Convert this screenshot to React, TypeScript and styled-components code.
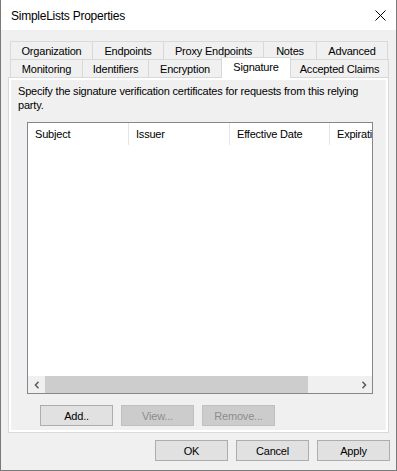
import styled, { createGlobalStyle } from "styled-components";

const GlobalStyle = createGlobalStyle`
  html, body {
    margin: 0;
    padding: 0;
    background: #f0f0f0;
  }
  * {
    box-sizing: border-box;
  }
`;

const Window = styled.div`
  width: 397px;
  height: 471px;
  display: flex;
  flex-direction: column;
  background: #f0f0f0;
  border: 1px solid #7a7a7a;
  border-top: none;
  font-family: "Liberation Sans", Arial, sans-serif;
  font-size: 11px;
  letter-spacing: -0.2px;
  color: #000;
`;

const TitleBar = styled.div`
  height: 30px;
  flex-shrink: 0;
  display: flex;
  align-items: center;
  justify-content: space-between;
  padding: 0 10px 0 10px;
  background: #fff;
`;

const Title = styled.span`
  font-size: 12px;
  letter-spacing: -0.25px;
  margin-top: 1px;
`;

const Close = styled.button`
  width: 12px;
  height: 12px;
  padding: 0;
  border: none;
  background: none;
  display: flex;
  align-items: center;
  justify-content: center;
`;

const Content = styled.div`
  flex: 1;
  display: flex;
  flex-direction: column;
  padding: 11px 7px 0 7px;
`;

const TabStrip = styled.div`
  display: flex;
  flex-direction: column;
  padding-left: 2px;
`;

const TabRow = styled.div`
  display: flex;
  align-items: flex-end;
  height: 18px;
`;

const Tab = styled.div<{ $w: number; $active?: boolean }>`
  position: relative;
  width: ${(p) => p.$w}px;
  height: ${(p) => (p.$active ? 21 : 18)}px;
  margin-left: -1px;
  margin-bottom: ${(p) => (p.$active ? -1 : 0)}px;
  z-index: ${(p) => (p.$active ? 1 : 0)};
  display: flex;
  align-items: center;
  justify-content: center;
  padding-bottom: ${(p) => (p.$active ? 3 : 0)}px;
  background: ${(p) => (p.$active ? "#fff" : "#f0f0f0")};
  border: 1px solid #d9d9d9;
  border-bottom: none;
  white-space: nowrap;

  &:first-child {
    margin-left: 0;
  }
`;

const Panel = styled.div`
  height: 356px;
  flex-shrink: 0;
  background: #fff;
  border: 1px solid #d9d9d9;
  padding: 2px;
  display: flex;
`;

const Page = styled.div`
  flex: 1;
  background: #f0f0f0;
  display: flex;
  flex-direction: column;
  padding: 4px 0 0 0;
`;

const Description = styled.p`
  margin: 0 0 0 7px;
  width: 350px;
  line-height: 14px;
`;

const ListView = styled.div`
  margin: 10px 0 0 16px;
  width: 346px;
  height: 272px;
  flex-shrink: 0;
  border: 1px solid #828790;
  background: #fff;
  display: flex;
  flex-direction: column;
  overflow: hidden;
`;

const HeaderRow = styled.div`
  height: 22px;
  display: flex;
  flex-shrink: 0;
`;

const HeaderCell = styled.div<{ $w: number }>`
  flex: 0 0 ${(p) => p.$w}px;
  display: flex;
  align-items: center;
  padding-left: 7px;
  border-right: 1px solid #e5e5e5;
  white-space: nowrap;
  overflow: hidden;
`;

const ListBody = styled.div`
  flex: 1;
`;

const HScroll = styled.div`
  height: 17px;
  display: flex;
  background: #f0f0f0;
`;

const ScrollArrow = styled.div`
  width: 17px;
  display: flex;
  align-items: center;
  justify-content: center;
`;

const ScrollTrack = styled.div`
  flex: 1;
  display: flex;
  align-items: stretch;
`;

const ScrollThumb = styled.div<{ $w: number }>`
  width: ${(p) => p.$w}px;
  background: #cdcdcd;
`;

const ButtonRow = styled.div<{ $inset: number; $end?: boolean }>`
  display: flex;
  gap: 8px;
  justify-content: ${(p) => (p.$end ? "flex-end" : "flex-start")};
  padding: 0 ${(p) => (p.$end ? p.$inset : 0)}px 0 ${(p) => (p.$end ? 0 : p.$inset)}px;
`;

const PanelButtons = styled(ButtonRow)`
  margin-top: 11px;
`;

const DialogButtons = styled(ButtonRow)`
  margin-top: 7px;
  margin-right: -7px;
`;

const Button = styled.button`
  width: 73px;
  height: 21px;
  padding: 0;
  background: #e1e1e1;
  border: 1px solid #adadad;
  font-family: "Liberation Sans", Arial, sans-serif;
  font-size: 11px;
  letter-spacing: -0.2px;
  color: #000;

  &:disabled {
    background: #cccccc;
    border-color: #bfbfbf;
    color: #8d8d8d;
  }
`;

const rowOne = [
  { label: "Organization", w: 83 },
  { label: "Endpoints", w: 72 },
  { label: "Proxy Endpoints", w: 101 },
  { label: "Notes", w: 54 },
  { label: "Advanced", w: 72 },
];

const rowTwo = [
  { label: "Monitoring", w: 73 },
  { label: "Identifiers", w: 67 },
  { label: "Encryption", w: 74 },
  { label: "Signature", w: 70, active: true },
  { label: "Accepted Claims", w: 99 },
];

const columns = [
  { label: "Subject", w: 101 },
  { label: "Issuer", w: 101 },
  { label: "Effective Date", w: 100 },
  { label: "Expiration Date", w: 100 },
];

function Chevron({ dir }: { dir: "left" | "right" }) {
  return (
    <svg width="6" height="8" viewBox="0 0 6 8">
      <path
        d={dir === "left" ? "M4.5 0.8 L1.5 4 L4.5 7.2" : "M1.5 0.8 L4.5 4 L1.5 7.2"}
        fill="none"
        stroke="#606060"
        strokeWidth="1.6"
      />
    </svg>
  );
}

export default function App() {
  return (
    <>
      <GlobalStyle />
      <Window>
        <TitleBar>
          <Title>SimpleLists Properties</Title>
          <Close aria-label="Close">
            <svg width="11" height="11" viewBox="0 0 11 11">
              <path d="M0.5 0.5 L10.5 10.5 M10.5 0.5 L0.5 10.5" stroke="#000" strokeWidth="1" />
            </svg>
          </Close>
        </TitleBar>
        <Content>
          <TabStrip>
            <TabRow>
              {rowOne.map((t) => (
                <Tab key={t.label} $w={t.w}>
                  {t.label}
                </Tab>
              ))}
            </TabRow>
            <TabRow>
              {rowTwo.map((t) => (
                <Tab key={t.label} $w={t.w} $active={t.active}>
                  {t.label}
                </Tab>
              ))}
            </TabRow>
          </TabStrip>
          <Panel>
            <Page>
              <Description>
                Specify the signature verification certificates for requests from this relying party.
              </Description>
              <ListView>
                <HeaderRow>
                  {columns.map((c) => (
                    <HeaderCell key={c.label} $w={c.w}>
                      {c.label}
                    </HeaderCell>
                  ))}
                </HeaderRow>
                <ListBody />
                <HScroll>
                  <ScrollArrow>
                    <Chevron dir="left" />
                  </ScrollArrow>
                  <ScrollTrack>
                    <ScrollThumb $w={263} />
                  </ScrollTrack>
                  <ScrollArrow>
                    <Chevron dir="right" />
                  </ScrollArrow>
                </HScroll>
              </ListView>
              <PanelButtons $inset={29}>
                <Button>Add..</Button>
                <Button disabled>View...</Button>
                <Button disabled>Remove...</Button>
              </PanelButtons>
            </Page>
          </Panel>
          <DialogButtons $inset={6} $end>
            <Button>OK</Button>
            <Button>Cancel</Button>
            <Button>Apply</Button>
          </DialogButtons>
        </Content>
      </Window>
    </>
  );
}
